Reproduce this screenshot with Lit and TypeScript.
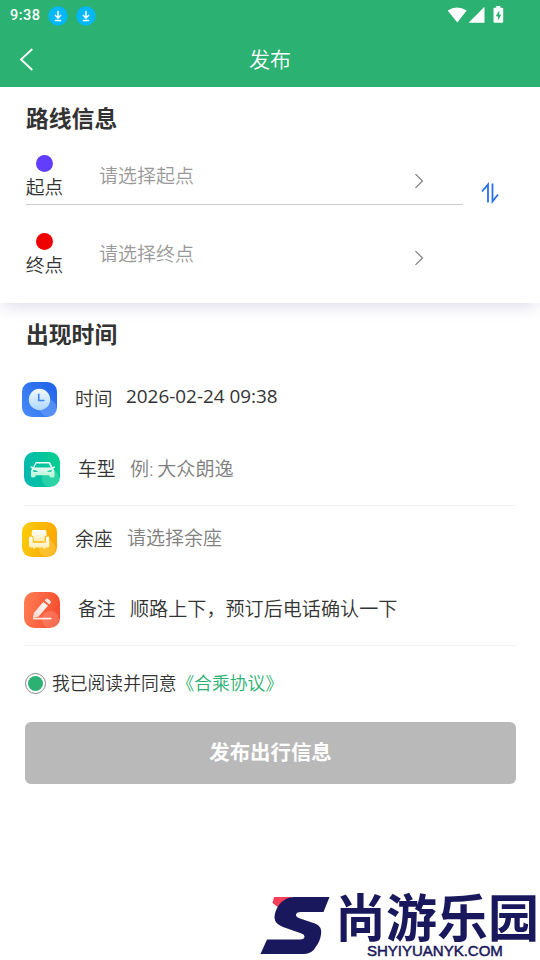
import { LitElement, html, css, svg } from "lit";
import { customElement, property } from "lit/decorators.js";

const clockIcon = svg`
  <defs>
    <linearGradient id="bg" x1="0" y1="1" x2="1" y2="0"><stop offset="0" stop-color="#4a8df9"/><stop offset="1" stop-color="#1e60e8"/></linearGradient>
    <linearGradient id="fg" x1="0" y1="0" x2="0" y2="1"><stop offset="0" stop-color="#f2faff"/><stop offset="1" stop-color="#aed8fd"/></linearGradient>
  </defs>
  <rect width="36" height="36" rx="10" fill="url(#bg)"/>
  <path d="M27 18.300a8.700 8.700 0 0 1 8.700 8.700q0 8-8.700 8.700a8.700 8.700 0 0 1 0-17.400z" fill="#8ab4ff" opacity=".4"/>
  <circle cx="18" cy="18" r="11" fill="url(#fg)"/>
  <path d="M17.200 12v7h5.800" fill="none" stroke="#3f82f2" stroke-width="1.700"/>`;

const carIcon = svg`
  <defs>
    <linearGradient id="bg" x1="0" y1="0.5" x2="1" y2="0.3"><stop offset="0" stop-color="#05b8b0"/><stop offset="1" stop-color="#06d08f"/></linearGradient>
    <linearGradient id="fg" x1="0" y1="0" x2="0" y2="1"><stop offset="0" stop-color="#ffffff"/><stop offset="1" stop-color="#b5f5d6"/></linearGradient>
  </defs>
  <rect width="36" height="35" rx="10" fill="url(#bg)"/>
  <circle cx="26.500" cy="26.300" r="8.700" fill="#7ff0c0" opacity=".3"/>
  <path fill="url(#fg)" fill-rule="evenodd" d="M12 10h13q1 0 1.400.9l2 4.200 2.200-.8.500 1.200-1.800 1q1.200 1.300 1.200 3v4.400q0 1.600-1.500 1.600H27q-1 0-1.300-1L25 23.200H12l-.7 1.300q-.3 1-1.300 1H8.500q-1.500 0-1.500-1.600v-4.400q0-1.700 1.200-3l-1.700-1 .5-1.200 2.200.8 2-4.200q.4-.9 1.300-.9zm.2 1.400l-1.900 4h16.400l-1.900-4zM8.800 18l1 2h4.200q-1.200-2-5.200-2zm19.400 0q-4 0-5.200 2h4.200z"/>`;

const seatIcon = svg`
  <defs>
    <linearGradient id="bg" x1="0" y1="0.4" x2="1" y2="0.6"><stop offset="0" stop-color="#f8cb0a"/><stop offset="1" stop-color="#fca503"/></linearGradient>
    <linearGradient id="fg" x1="0" y1="0" x2="0" y2="1"><stop offset="0" stop-color="#ffffff"/><stop offset="1" stop-color="#ffedb0"/></linearGradient>
  </defs>
  <rect width="36" height="36" rx="10" fill="url(#bg)"/>
  <circle cx="26" cy="27.500" r="8.500" fill="#ffe27a" opacity=".35"/>
  <g fill="url(#fg)">
    <path d="M12 8.300h11q2.200 0 2.200 2.200v3.400q-2 .8-2 3v2.900H12v-2.900q0-2.200-2-3v-3.400q0-2.200 2-2.200z"/>
    <path d="M9 15q2 0 2 2v4.300h13.500V17q0-2 2-2h.200q1.300 0 1.300 1.500v7.800q0 2-2 2h-2v1.200h-2v-1.200h-8.500v1.200h-2v-1.200H9.200q-2 0-2-2v-7.800Q7.200 15 9 15z"/>
  </g>`;

const noteIcon = svg`
  <defs>
    <linearGradient id="bg" x1="0" y1="0.4" x2="1" y2="0.6"><stop offset="0" stop-color="#ff7b50"/><stop offset="1" stop-color="#f54c30"/></linearGradient>
    <linearGradient id="fg" x1="1" y1="0" x2="0" y2="1"><stop offset="0" stop-color="#ffffff"/><stop offset="1" stop-color="#ffd3c8"/></linearGradient>
  </defs>
  <rect width="36" height="36" rx="10" fill="url(#bg)"/>
  <circle cx="26.500" cy="27.500" r="8.500" fill="#ffb0a0" opacity=".3"/>
  <g fill="url(#fg)">
    <path d="M19.300 9.900l4.600 3.800-9.300 10.900-5.400 1.500q-.5 0-.4-.6l1.300-5z"/>
    <path d="M20.700 8.500l1.300-1.400q1-1 2-.2l2.400 2q1 1 .2 2l-1.300 1.500z"/>
    <rect x="9" y="25.700" width="18.500" height="1.700" rx=".5"/>
  </g>`;

@customElement("status-bar")
class StatusBar extends LitElement {
  static styles = css`
    :host { display: flex; align-items: center; height: 31px; padding: 0 35px 0 10px; color: #fff; }
    .clock { width: 38px; font: 500 14.500px/31px Roboto, sans-serif; letter-spacing: 0.5px; }
    .dl { width: 20px; height: 20px; margin-right: 8px; }
    .sys { margin-left: auto; width: 58px; height: 20px; margin-top: -2px; }
  `;
  render() {
    const dl = html`<svg class="dl" viewBox="0 0 20 20"><circle cx="10" cy="10" r="9.700" fill="#00b8fb"/><path d="M10 5v7M7 9l3 3.200L13 9M6.800 14.600h6.400" fill="none" stroke="#fff" stroke-width="1.500"/></svg>`;
    return html`<span class="clock">9:38</span>${dl}${dl}
      <svg class="sys" viewBox="0 0 58 20">
        <path fill="#fff" d="M.7 5.600Q10 -.5 19.700 5.600L10.300 17.500zM21.600 17.800L37.500 1.800v16z"/>
        <path fill="#fff" d="M49.300 1h4v1.800h1.900q1 0 1 1v13q0 1-1 1h-7.700q-1 0-1-1v-13q0-1 1-1h1.800z"/>
        <path fill="#2bb171" d="M52.300 5.500l-3.600 5.700h2.200v4.300l3.400-5.700h-2z"/>
      </svg>`;
  }
}

@customElement("place-row")
class PlaceRow extends LitElement {
  @property() label = "";
  @property() hint = "";
  @property() color = "";
  static styles = css`
    :host { display: flex; width: 437px; }
    .mark { width: 37px; display: flex; flex-direction: column; align-items: center; font-size: 18.700px; line-height: 28px; color: #333; white-space: nowrap; }
    .dot { width: 17px; height: 17px; border-radius: 50%; margin: 19px 0 1px; }
    .hint { margin-left: 36px; font-size: 19px; line-height: 28px; padding-top: 26px; color: #999; flex: 1; }
    .arrow { width: 10px; height: 16px; margin: 37px 39px 0 0; }
    :host(.end) .arrow { margin-top: 36px; }
  `;
  render() {
    return html`
      <div class="mark"><span class="dot" style="background:${this.color}"></span><span>${this.label}</span></div>
      <div class="hint">${this.hint}</div>
      <svg class="arrow" viewBox="0 0 10 16"><path d="M1.500 1.200L8.500 8l-7 6.800" fill="none" stroke="#777" stroke-width="1.100"/></svg>`;
  }
}

@customElement("field-row")
class FieldRow extends LitElement {
  @property() label = "";
  @property() value = "";
  @property({ type: Boolean }) muted = false;
  @property({ type: Boolean, reflect: true }) input = false;
  @property({ attribute: false }) icon: unknown;
  static styles = css`
    :host { display: flex; align-items: center; box-sizing: border-box; height: 68px; margin: 0 24px 0 22px; padding-bottom: 1px; font-size: 18.800px; line-height: 28px; color: #333; }
    :host([input]) { height: 72px; margin-left: 24px; border-bottom: 1px solid #f3f3f3; padding: 1px 0 0; }
    .icon { width: 35px; height: 35px; margin-right: 18px; }
    :host([input]) .icon { width: 36px; height: 36px; }
    .label { width: 52px; margin-top: -2px; }
    .value { margin-top: -3px; font-size: 19px; word-spacing: -1.500px; }
    .date { font: 400 18.900px/28px "Open Sans", "Noto Sans", sans-serif; margin-top: -7px; margin-left: -1px; word-spacing: 0; }
    :host([input]) .value { font-size: 19.100px; }
    .muted { color: #808080; }
  `;
  render() {
    const kind = this.muted ? "muted" : /^\d/.test(this.value) ? "date" : "";
    return html`
      <svg class="icon" viewBox="0 0 36 36">${this.icon}</svg>
      <span class="label">${this.label}</span>
      <span class="value ${kind}">${this.value}</span>`;
  }
}

@customElement("site-mark")
class SiteMark extends LitElement {
  static styles = css`
    :host { display: flex; color: #19185c; }
    .swoosh { width: 70px; height: 64px; margin-right: 5px; }
    .words { display: flex; flex-direction: column; width: 206px; }
    .name { font: 700 51px/52px "Noto Sans CJK SC", sans-serif; white-space: nowrap; margin-top: -3px; }
    .site { font: 15px/16px "Liberation Sans", sans-serif; margin-top: 2px; padding-left: 32px; -webkit-text-stroke: 0.500px #19185c; }
  `;
  render() {
    return html`
      <svg class="swoosh" viewBox="0 0 70 64">
        <path d="M14 5H32L19 16l-6.500-5z" fill="#fb3f58"/>
        <path fill="#19185c" d="M34 5h35.500l-6 15H41q-5 0-5 3 0 2 4 3.500l15 5q7.500 3 6 11-1 7-5 12-4 7.500-12 7.500H.5L7 47.500h33q4.500 0 4.500-3 0-2-3-3L23 35q-8-3-8.500-9 0-7 4.500-13 6-8 15-8z"/>
      </svg>
      <div class="words"><span class="name">尚游乐园</span><span class="site">SHYIYUANYK.COM</span></div>`;
  }
}

@customElement("app-root")
class AppRoot extends LitElement {
  static styles = css`
    :host { display: block; position: relative; width: 540px; height: 960px; overflow: hidden; background: #fff; font-family: "Noto Sans", "Noto Sans CJK SC", sans-serif; font-weight: 350; color: #333; }
    .top { background: #2bb171; height: 87px; }
    .nav { display: grid; grid-template-columns: 60px 1fr 60px; height: 56px; align-items: center; color: #fff; font-size: 21px; text-align: center; }
    .title { margin-top: -3px; }
    .back { width: 15px; height: 23px; margin-left: 19px; margin-top: 1px; }
    .route { box-sizing: border-box; height: 216px; padding: 15px 26px 0; box-shadow: 0 5px 16px -3px rgba(60, 50, 130, 0.2); clip-path: inset(0 0 -30px 0); }
    h2 { margin: 0; font-size: 22.800px; line-height: 34px; font-weight: 700; }
    .ends { display: flex; }
    .start { height: 68px; border-bottom: 1px solid #ccc; }
    .end { padding-top: 9px; }
    .swap { width: 18px; height: 22px; margin: 46px 0 0 18px; }
    .when { padding: 15px 26px 14px; }
    .agree { display: flex; align-items: center; height: 28px; padding: 23px 25px 0; font-size: 17.800px; line-height: 28px; }
    .radio { box-sizing: border-box; width: 21px; height: 21px; border: 1px solid #888; border-radius: 50%; padding: 2px; background: #2bb171 content-box; margin-right: 6px; }
    .terms { color: #2bb171; }
    .submit { display: block; width: 491px; height: 62px; margin: 25px 0 0 25px; border: 0; border-radius: 6px; background: #b9b9b9; color: #fff; font: 700 20.400px/58px "Noto Sans CJK SC", sans-serif; padding: 0 0 4px; }
    .watermark { position: absolute; left: 260px; top: 892px; }
  `;
  render() {
    return html`
      <header class="top">
        <status-bar></status-bar>
        <div class="nav">
          <svg class="back" viewBox="0 0 15 23"><path d="M13.300 1L2 11.500 13.300 22" fill="none" stroke="#fff" stroke-width="1.800"/></svg>
          <span class="title">发布</span>
        </div>
      </header>
      <section class="route">
        <h2>路线信息</h2>
        <div class="ends">
          <div>
            <place-row class="start" label="起点" hint="请选择起点" color="#623dff"></place-row>
            <place-row class="end" label="终点" hint="请选择终点" color="#ee0000"></place-row>
          </div>
          <svg class="swap" viewBox="0 0 18 22"><path d="M1 9.500L7 2.500v18M11.500 1.500v18L17 12.500" fill="none" stroke="#276ff5" stroke-width="1.800"/></svg>
        </div>
      </section>
      <h2 class="when">出现时间</h2>
      <field-row label="时间" value="2026-02-24 09:38" .icon=${clockIcon}></field-row>
      <field-row input muted label="车型" value="例: 大众朗逸" .icon=${carIcon}></field-row>
      <field-row muted label="余座" value="请选择余座" .icon=${seatIcon}></field-row>
      <field-row input label="备注" value="顺路上下，预订后电话确认一下" .icon=${noteIcon}></field-row>
      <div class="agree"><span class="radio"></span>我已阅读并同意<span class="terms">《合乘协议》</span></div>
      <button class="submit">发布出行信息</button>
      <site-mark class="watermark"></site-mark>`;
  }
}
